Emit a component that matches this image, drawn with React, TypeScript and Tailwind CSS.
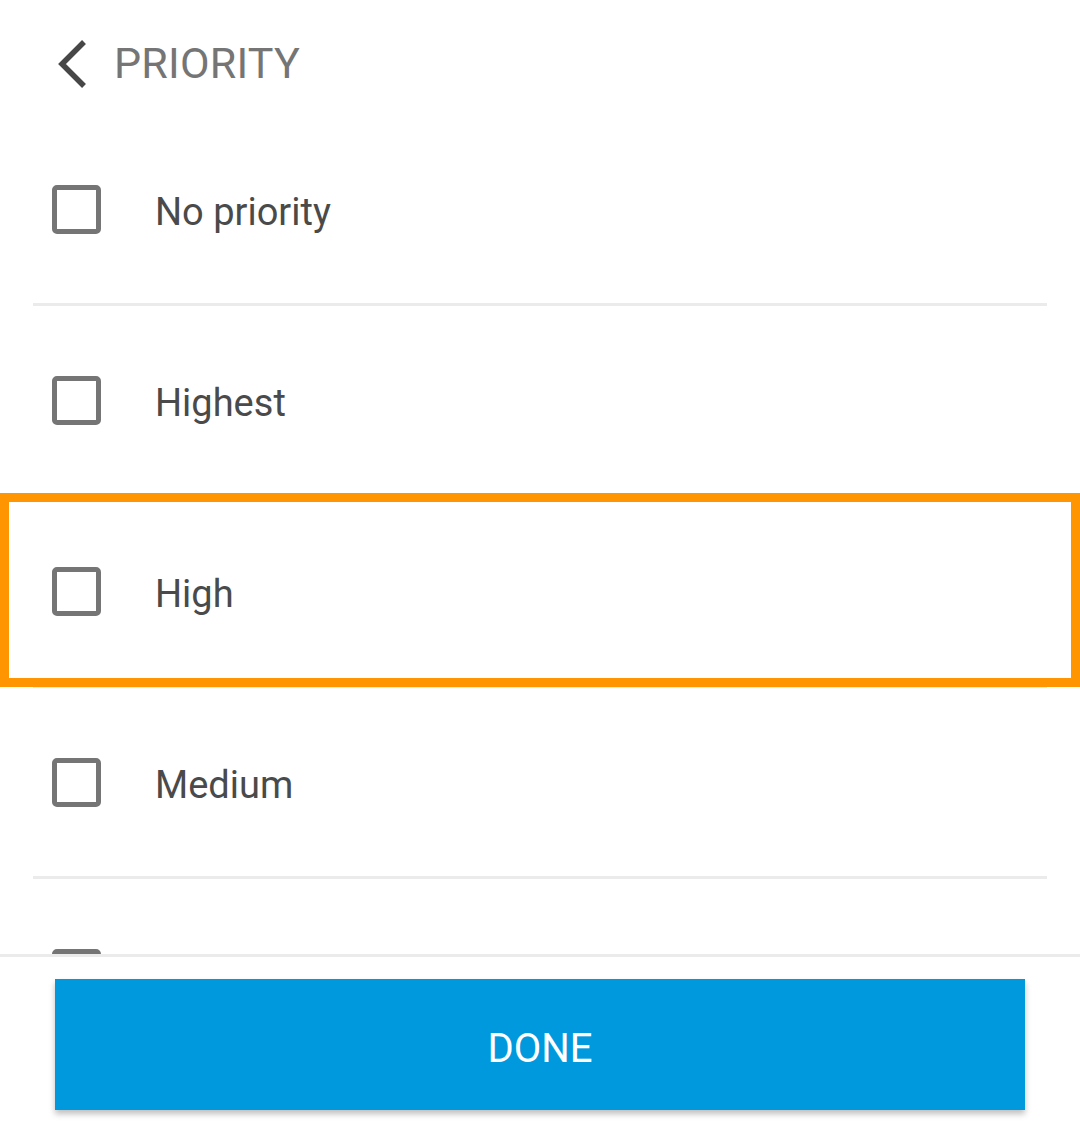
import React from 'react';

const options = ['No priority', 'Highest', 'High', 'Medium', 'Low'];

const Checkbox: React.FC = () => (
  <div className="w-[49px] h-[49px] rounded-[5px] border-[5px] border-[#757575] shrink-0" />
);

export default function App() {
  return (
    <div className="w-[1080px] h-[1132px] bg-white flex flex-col overflow-hidden" style={{ fontFamily: 'Roboto, "Noto Sans", sans-serif' }}>
      <header className="h-[115px] shrink-0 flex items-center">
        <svg width="40" height="50" viewBox="0 0 40 50" className="ml-[52px] mt-[12px]">
          <polyline points="32,3 10,25 32,47" fill="none" stroke="#474747" strokeWidth="5.5" />
        </svg>
        <h1 className="ml-[22px] mt-[12px] text-[43px] text-[#757575] tracking-[0.2px]">PRIORITY</h1>
      </header>

      <div className="flex-1 overflow-hidden">
        {options.map((label) => (
          <div key={label} className="relative h-[191px] flex flex-col">
            <div className="flex-1 flex items-center">
              <div className="ml-[52px]">
                <Checkbox />
              </div>
              <span className="ml-[54px] pt-[7px] text-[38px] text-[#4a4a4a]">{label}</span>
            </div>
            <div className="mx-[33px] h-[3px] bg-[#ebebeb]" />
            {label === 'High' && (
              <div className="absolute left-0 right-0 -top-[4px] bottom-[1px] border-[9px] border-[#ff9500]" />
            )}
          </div>
        ))}
      </div>

      <footer className="shrink-0 border-t-[3px] border-[#ebebeb] pt-[22px] pb-[22px] px-[55px] bg-white">
        <button className="w-[970px] h-[131px] pt-[8px] bg-[#0099dd] text-white text-[40px] shadow-[0_4px_6px_rgba(0,0,0,0.25)]">
          DONE
        </button>
      </footer>
    </div>
  );
}
